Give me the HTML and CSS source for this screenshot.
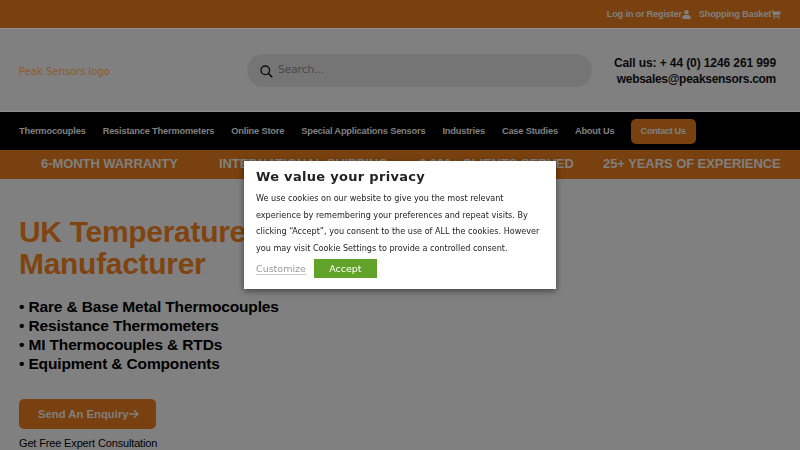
FILE: index.html
```html
<!DOCTYPE html>
<html lang="en">
<head>
    <meta charset="UTF-8">
    <title>Peak Sensors</title>
    <link rel="stylesheet" href="styles.css">
</head>
<body>

    <div class="topbar">
        <a class="toplink">Log in or Register
            <svg width="9" height="9" viewBox="0 0 10 10"><circle cx="5" cy="2.6" r="2.5" fill="currentColor"/><path d="M0.4 10V8.2C0.4 6.6 1.7 5.6 3 5.6H7C8.3 5.6 9.6 6.6 9.6 8.2V10Z" fill="currentColor"/></svg>
        </a>
        <a class="toplink">Shopping Basket
            <svg width="10" height="9" viewBox="0 0 11 10"><path d="M0 .5H2L2.4 1.6H10.8L9.6 5.9H3.4L3.7 7H9.5V8H2.8L1.4 1.5H0Z" fill="currentColor"/><circle cx="3.6" cy="9.1" r=".9" fill="currentColor"/><circle cx="8.6" cy="9.1" r=".9" fill="currentColor"/></svg>
        </a>
    </div>

    <div class="header">
        <div class="logo">Peak Sensors logo</div>
        <div class="search">
            <svg width="13" height="13" viewBox="0 0 13 13"><circle cx="5.3" cy="5.3" r="4.3" fill="none" stroke="currentColor" stroke-width="1.3"/><path d="M8.5 8.5L12.3 12.3" stroke="currentColor" stroke-width="1.6"/></svg>
            <span>Search...</span>
        </div>
        <div class="contact">
            <div class="call">Call us: + 44 (0) 1246 261 999</div>
            <div class="mail">websales@peaksensors.com</div>
        </div>
    </div>

    <div class="nav">
        <a>Thermocouples</a>
        <a>Resistance Thermometers</a>
        <a>Online Store</a>
        <a>Special Applications Sensors</a>
        <a>Industries</a>
        <a>Case Studies</a>
        <a>About Us</a>
        <a class="nav-btn">Contact Us</a>
    </div>

    <div class="strip">
        <span>6-MONTH WARRANTY</span>
        <span>INTERNATIONAL SHIPPING</span>
        <span>3,000+ CLIENTS SERVED</span>
        <span>25+ YEARS OF EXPERIENCE</span>
    </div>

    <div class="hero">
        <h1>UK Temperature Sensor<br>Manufacturer</h1>
        <ul>
            <li>• Rare &amp; Base Metal Thermocouples</li>
            <li>• Resistance Thermometers</li>
            <li>• MI Thermocouples &amp; RTDs</li>
            <li>• Equipment &amp; Components</li>
        </ul>
        <a class="enquiry">Send An Enquiry
            <svg width="10" height="10" viewBox="0 0 11 10"><path d="M0 5H9.5M5.6 .9L9.7 5L5.6 9.1" fill="none" stroke="currentColor" stroke-width="1.6"/></svg>
        </a>
        <p class="free">Get Free Expert Consultation</p>
    </div>

    <div class="cookie">
        <h2>We value your privacy</h2>
        <p>We use cookies on our website to give you the most relevant experience by remembering your preferences and repeat visits. By clicking “Accept”, you consent to the use of ALL the cookies. However you may visit Cookie Settings to provide a controlled consent.</p>
        <div class="cookie-actions">
            <a class="customize">Customize</a>
            <a class="accept">Accept</a>
        </div>
    </div>

</body>
</html>
```

FILE: styles.css
```css
/* Base - colours are the dimmed ones, the page sits behind the cookie dialog */
html, body {
    height: 450px;
    overflow: hidden;
}

body {
    font-family: "Liberation Sans", Arial, sans-serif;
    font-weight: 700;
    margin: 0;
    background-color: #808080;
    color: #000;
}

/* Top bar */
.topbar {
    display: flex;
    justify-content: flex-end;
    align-items: center;
    gap: 8px;
    height: 28px;
    padding: 0 19px 0 0;
    background-color: #78410f;
    border-bottom: 1px solid #8e8e8e;
    color: #808080;
    font-size: 9.3px;
    letter-spacing: -0.25px;
}

.toplink {
    display: flex;
    align-items: center;
}

/* Header */
.header {
    display: flex;
    align-items: center;
    height: 82px;
    padding: 0 24px 0 19px;
    border-bottom: 1px solid #8e8e8e;
}

.logo {
    width: 228px;
    margin-top: 2px;
    font-family: "DejaVu Sans", sans-serif;
    font-size: 10px;
    font-weight: 400;
    color: #8f5a2a;
}

.search {
    display: flex;
    align-items: center;
    gap: 5px;
    box-sizing: border-box;
    width: 345px;
    height: 33px;
    margin-top: 1px;
    padding: 0 0 3px 13px;
    border-radius: 17px;
    background-color: #757575;
    font-family: "DejaVu Sans", sans-serif;
    font-size: 10.5px;
    font-weight: 400;
    color: #484848;
}

.search svg {
    color: #0c0c0c;
    margin-top: 5px;
}

.contact {
    flex: 1;
    margin-top: 2px;
    text-align: right;
    font-size: 12px;
    line-height: 16.5px;
    color: #0a0a0a;
}

.call {
    letter-spacing: -0.1px;
}

.mail {
    letter-spacing: -0.3px;
}

/* Main nav */
.nav {
    display: flex;
    align-items: center;
    gap: 17px;
    height: 38px;
    padding: 0 19px;
    background-color: #000;
    color: #808080;
    font-size: 9.3px;
    letter-spacing: -0.2px;
}

.nav-btn {
    margin-left: -1px;
    padding: 7.5px 10px;
    border-radius: 5px;
    background-color: #78410f;
    letter-spacing: -0.4px;
}

/* Strip under the nav */
.strip {
    display: grid;
    grid-template-columns: 178px 200px 184px auto;
    height: 29px;
    padding-left: 41px;
    background-color: #78410f;
    color: #808080;
    font-size: 13px;
    line-height: 28px;
    letter-spacing: -0.07px;
    white-space: nowrap;
}

/* Hero */
.hero {
    padding: 37px 19px 0;
}

h1 {
    margin: 0;
    font-size: 30px;
    font-weight: 700;
    line-height: 32px;
    letter-spacing: -0.3px;
    color: #7f4410;
}

ul {
    list-style: none;
    margin: 17px 0 0;
    padding: 0;
    font-size: 15.5px;
    line-height: 19px;
    letter-spacing: -0.15px;
}

.enquiry {
    display: inline-flex;
    align-items: center;
    box-sizing: border-box;
    height: 30px;
    margin-top: 26px;
    padding: 0 17px 0 19px;
    border-radius: 5px;
    background-color: #78410f;
    color: #808080;
    font-size: 11.3px;
}

.free {
    margin: 8px 0 0;
    font-size: 11px;
    font-weight: 400;
    letter-spacing: -0.15px;
}

/* Cookie dialog */
.cookie {
    position: fixed;
    left: 244px;
    top: 161px;
    box-sizing: border-box;
    width: 312px;
    height: 128px;
    padding: 8px 12px;
    background-color: white;
    box-shadow: 0 2px 6px rgba(0, 0, 0, 0.5);
    font-family: "DejaVu Sans", sans-serif;
    font-weight: 400;
    color: #222;
}

.cookie h2 {
    margin: 0;
    font-size: 13px;
    font-weight: 700;
    line-height: 16px;
    letter-spacing: 0.3px;
}

.cookie p {
    margin: 5px 0 0;
    font-family: "DejaVu Sans Condensed", "DejaVu Sans", sans-serif;
    font-stretch: condensed;
    font-size: 9px;
    line-height: 16.6px;
}

.cookie-actions {
    display: flex;
    align-items: center;
    gap: 8px;
    margin-top: 3px;
    font-size: 9.5px;
}

.customize {
    color: #999;
    border-bottom: 1px solid #ccc;
}

.accept {
    width: 63px;
    line-height: 19px;
    text-align: center;
    background-color: #61a229;
    color: white;
}
```
